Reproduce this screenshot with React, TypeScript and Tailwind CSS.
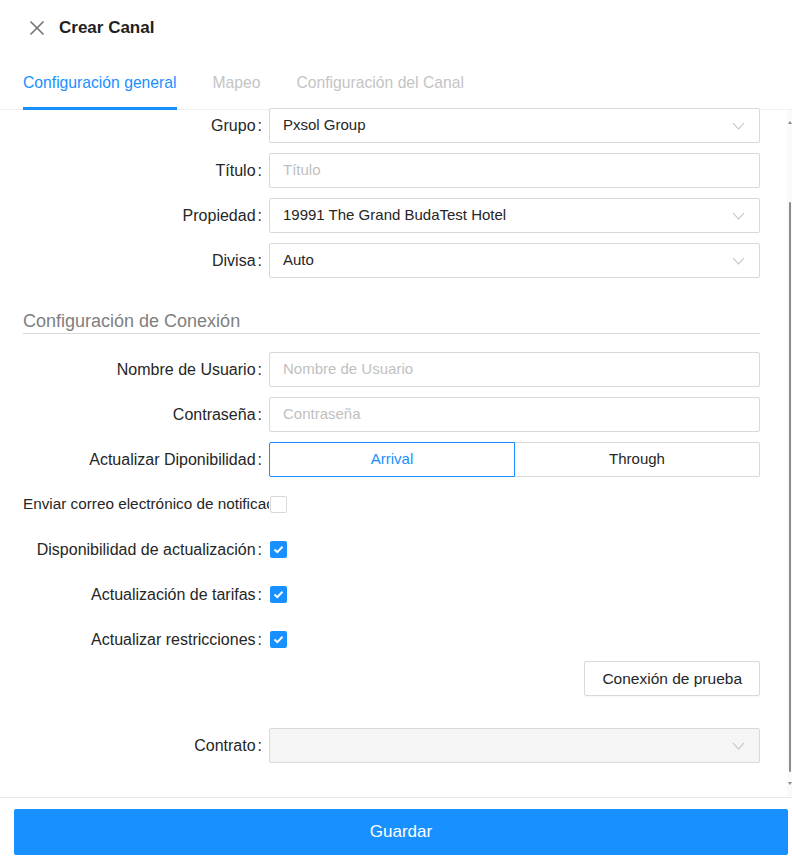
import React from 'react';

const font = { fontFamily: '"Liberation Sans", Arial, sans-serif' };

function Chevron() {
  return (
    <svg width="13" height="8" viewBox="0 0 13 8" className="absolute right-[14px] top-1/2 -translate-y-1/2">
      <polyline points="1,1 6.5,7 12,1" fill="none" stroke="#bfbfbf" strokeWidth="1.1" />
    </svg>
  );
}

function Row({ label, children, clip }: { label: string; children: React.ReactNode; clip?: boolean }) {
  return (
    <div className="flex h-[35px] items-center mb-[10px]">
      <div
        className={
          'w-[246px] shrink-0 text-[#262626] whitespace-nowrap ' +
          (clip ? 'overflow-hidden text-left text-[15.3px]' : 'text-right pr-[7px] text-[16px]')
        }
      >
        {label}
        {!clip && <span className="ml-[2px]">:</span>}
      </div>
      <div className="flex-1 flex items-center h-full">{children}</div>
    </div>
  );
}

function Select({ value, disabled }: { value?: string; disabled?: boolean }) {
  return (
    <div
      className={
        'relative h-[35px] w-full border border-[#d9d9d9] rounded-[2px] flex items-center px-[13px] text-[15px] text-[#262626] ' +
        (disabled ? 'bg-[#f5f5f5]' : 'bg-white')
      }
    >
      {value}
      <Chevron />
    </div>
  );
}

function Input({ placeholder }: { placeholder: string }) {
  return (
    <div className="h-[35px] w-full border border-[#d9d9d9] rounded-[2px] flex items-center px-[13px] text-[15px] text-[#bfbfbf] bg-white">
      {placeholder}
    </div>
  );
}

function Checkbox({ checked }: { checked?: boolean }) {
  return checked ? (
    <div className="ml-px w-[17px] h-[17px] rounded-[2px] bg-[#1890ff] flex items-center justify-center">
      <svg width="11" height="9" viewBox="0 0 11 9">
        <polyline points="1.5,4.5 4.3,7.2 9.5,1.8" fill="none" stroke="white" strokeWidth="2" />
      </svg>
    </div>
  ) : (
    <div className="ml-px w-[17px] h-[17px] rounded-[2px] border border-[#d9d9d9] bg-white" />
  );
}

export default function App() {
  return (
    <div className="w-[792px] h-[860px] bg-white flex flex-col overflow-hidden" style={font}>
      {/* Header */}
      <div className="h-[56px] flex items-center pl-[29px] shrink-0">
        <svg width="16" height="16" viewBox="0 0 16 16">
          <path d="M1.5 1.5 L14.5 14.5 M14.5 1.5 L1.5 14.5" stroke="#737373" strokeWidth="1.6" />
        </svg>
        <span className="ml-[14px] text-[17px] font-bold text-[#1f1f1f]">Crear Canal</span>
      </div>

      {/* Tabs */}
      <div className="h-[54px] shrink-0 flex items-end border-b border-[#f0f0f0] pl-[23px] gap-[36px]">
        <div className="relative pb-[14px] text-[15.7px] text-[#1890ff]">
          Configuración general
          <div className="absolute left-0 right-0 bottom-[-1px] h-[3px] bg-[#1890ff]" />
        </div>
        <div className="pb-[14px] text-[15.7px] text-[#c4c4c4]">Mapeo</div>
        <div className="pb-[14px] text-[15.7px] text-[#c4c4c4]">Configuración del Canal</div>
      </div>

      {/* Scroll body */}
      <div className="flex-1 flex min-h-0">
        <div className="flex-1 pl-[23px] pr-[27px] -mt-[2px]">
          <Row label="Grupo">
            <Select value="Pxsol Group" />
          </Row>
          <Row label="Título">
            <Input placeholder="Título" />
          </Row>
          <Row label="Propiedad">
            <Select value="19991 The Grand BudaTest Hotel" />
          </Row>
          <Row label="Divisa">
            <Select value="Auto" />
          </Row>

          <div className="mt-[32px] mb-[18px] pb-[1px] leading-[22px] border-b border-[#d9d9d9] text-[18px] text-[#808080]">
            Configuración de Conexión
          </div>

          <Row label="Nombre de Usuario">
            <Input placeholder="Nombre de Usuario" />
          </Row>
          <Row label="Contraseña">
            <Input placeholder="Contraseña" />
          </Row>
          <Row label="Actualizar Diponibilidad">
            <div className="flex w-full h-[35px] text-[15px]">
              <div className="flex-1 border border-[#1890ff] rounded-l-[2px] flex items-center justify-center text-[#1890ff]">
                Arrival
              </div>
              <div className="flex-1 border border-l-0 border-[#d9d9d9] rounded-r-[2px] flex items-center justify-center text-[#262626]">
                Through
              </div>
            </div>
          </Row>
          <Row label="Enviar correo electrónico de notificación" clip>
            <Checkbox />
          </Row>
          <Row label="Disponibilidad de actualización">
            <Checkbox checked />
          </Row>
          <Row label="Actualización de tarifas">
            <Checkbox checked />
          </Row>
          <Row label="Actualizar restricciones">
            <Checkbox checked />
          </Row>

          <div className="flex justify-end -mt-[6px]">
            <div className="h-[35px] px-[17px] border border-[#d9d9d9] rounded-[2px] flex items-center text-[15.5px] text-[#262626] shadow-[0_2px_0_rgba(0,0,0,0.02)]">
              Conexión de prueba
            </div>
          </div>

          <div className="mt-[32px]">
            <Row label="Contrato">
              <Select disabled />
            </Row>
          </div>
        </div>

        {/* Scrollbar */}
        <div className="w-[5px] shrink-0 bg-[#fafafa] flex flex-col items-center pt-[11px] pb-[12px]">
          <svg width="4" height="3" viewBox="0 0 4 3">
            <polygon points="2,0 4,3 0,3" fill="#8a8a8a" />
          </svg>
          <div className="mt-[78px] flex-1 w-[2px] bg-[#8c8c8c] rounded-full" />
          <svg width="4" height="3" viewBox="0 0 4 3" className="mt-[10px]">
            <polygon points="0,0 4,0 2,3" fill="#8a8a8a" />
          </svg>
        </div>
      </div>

      {/* Footer */}
      <div className="h-[63px] shrink-0 border-t border-[#e8e8e8] px-[14px] pt-[11px] pr-[4px]">
        <div className="h-[46px] bg-[#1890ff] rounded-[2px] flex items-center justify-center text-white text-[17px]">
          Guardar
        </div>
      </div>
    </div>
  );
}
